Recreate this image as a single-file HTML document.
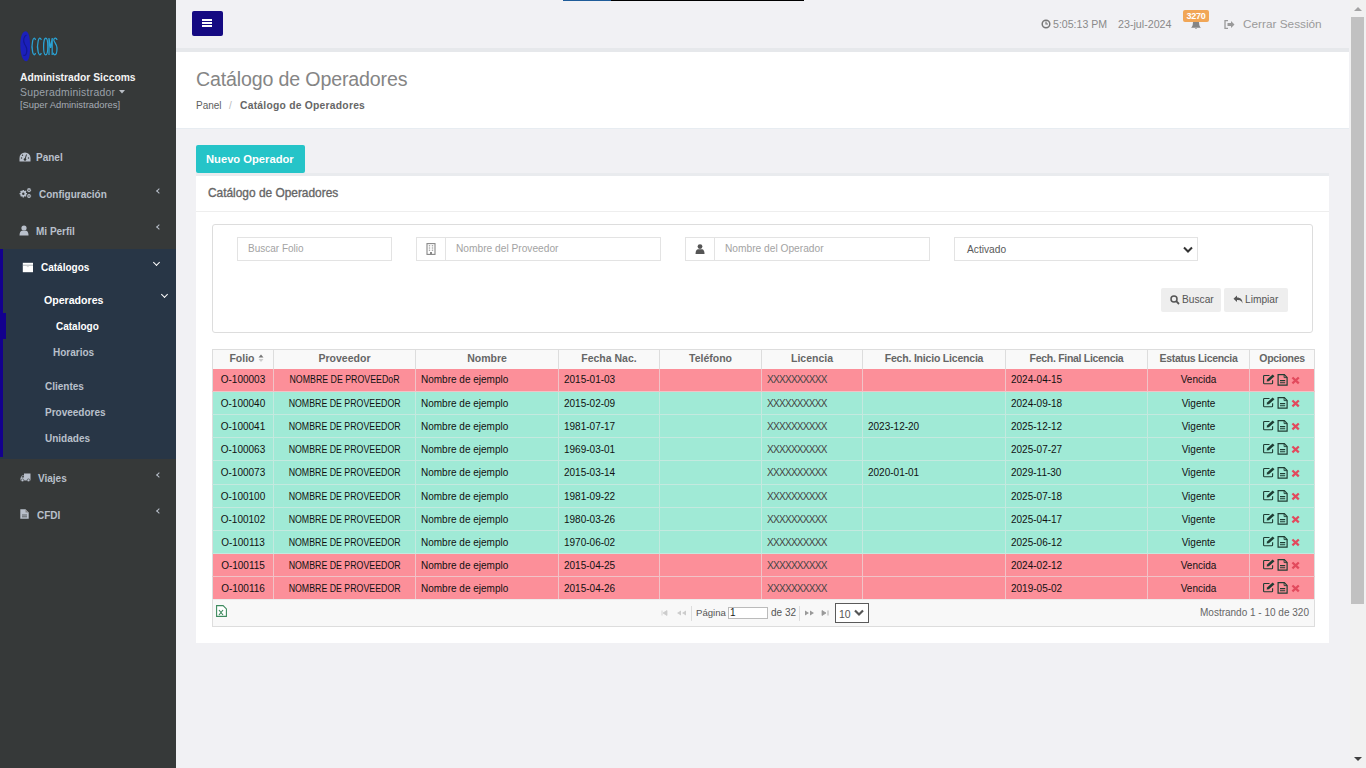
<!DOCTYPE html>
<html><head><meta charset="utf-8">
<style>
*{box-sizing:border-box;margin:0;padding:0}
html,body{width:1366px;height:768px;overflow:hidden;background:#f1f1f4;font-family:"Liberation Sans",sans-serif}
.a{position:absolute;white-space:nowrap;line-height:1}
#sb{position:absolute;left:0;top:0;width:176px;height:768px;background:#363939}
#cat{position:absolute;left:0;top:249px;width:176px;height:210px;background:#283646}
#strip{position:absolute;left:0;top:249px;width:3px;height:208px;background:#13008e}
#strip2{position:absolute;left:0;top:313px;width:6px;height:26px;background:#13008e}
.nav{color:#b9c0cb;font-weight:bold;font-size:10px}
.chl{position:absolute;width:4px;height:4px;border-left:1.4px solid #b9c0cb;border-bottom:1.4px solid #b9c0cb;transform:rotate(45deg)}
.chd{position:absolute;width:5px;height:5px;border-right:1.6px solid #fff;border-bottom:1.6px solid #fff;transform:rotate(45deg)}
#hdr{position:absolute;left:176px;top:0;width:1173px;height:48px;background:#f1f1f4}
#hdrb{position:absolute;left:176px;top:48px;width:1173px;height:4px;background:#e6e8eb}
#ttl{position:absolute;left:176px;top:52px;width:1173px;height:77px;background:#fff;border-bottom:1px solid #e7ecf1}
#panel{position:absolute;left:196px;top:176px;width:1133px;height:467px;background:#fff}
#ptop{position:absolute;left:196px;top:173px;width:1133px;height:3px;background:#e9ebee}
.inp{position:absolute;border:1px solid #e3e3e3;background:#fff;height:24px;top:237px}
.ph{position:absolute;color:#a3a3a3;font-size:10.2px;line-height:1;white-space:nowrap}
.btn{position:absolute;background:#eeeeee;border-radius:2px;top:288px;height:24px}
table.g{position:absolute;left:212px;top:349px;width:1102px;border-collapse:collapse;table-layout:fixed;font-size:10px;color:#111}
table.g th{height:19px;background:#f9f9f9;border:1px solid #dddddd;border-bottom:none;font-weight:bold;color:#666;font-size:10.5px;padding:0;line-height:1}
table.g td{border-right:1px solid #f6eeee;border-bottom:1px solid #eeeeee;padding:1px 5px 0;white-space:nowrap;overflow:hidden;line-height:1}
table.g td:first-child{border-left:1px solid #dddddd}
table.g td:last-child{border-right:1px solid #dddddd}
tr.r td{background:#fc8f99}
tr.v td{background:#a0ead6}
table.g td.c{text-align:center}
table.g td.prov span{display:inline-block;transform:scaleX(0.88)}
table.g td.lic{letter-spacing:-0.7px;color:#444}
table.g th span.t{position:relative;top:-1px}
table.g td svg{display:block;margin:0 0 0 8px}
tr.v td{border-right-color:#c4e9df;border-bottom-color:#c4e9df}
tr.r td{border-right-color:#f1c3c7;border-bottom-color:#f1c3c7}
#pager{position:absolute;left:212px;top:599px;width:1103px;height:28px;background:#f8f8f8;border:1px solid #dddddd;border-top:1px solid #ececec}
.pt{position:absolute;font-size:10px;color:#555;line-height:1;white-space:nowrap}
#sbar{position:absolute;left:1350px;top:0;width:16px;height:768px;background:#f1f1f1}
#thumb{position:absolute;left:1351px;top:17px;width:13px;height:587px;background:#c1c1c1}
</style></head><body>
<svg width="0" height="0" style="position:absolute">
 <defs>
  <g id="ops">
   <path d="M6.5 1.5H1.4a0.8 0.8 0 0 0-0.8 0.8v6.6a0.8 0.8 0 0 0 0.8 0.8h7.4a0.8 0.8 0 0 0 0.8-0.8V6.2" fill="none" stroke="#1f3d33" stroke-width="1.1"/>
   <path d="M3.6 7.6l0.5-2.2 5.6-5 1.8 1.8-5.6 5z" fill="#1f3d33"/>
   <path d="M15.1 0.6H21.3L24.1 3.4V11.2H15.1Z" fill="none" stroke="#1f3d33" stroke-width="1.2"/>
   <path d="M21.1 0.6V3.6H24.1" fill="none" stroke="#1f3d33" stroke-width="0.9"/>
   <path d="M17 6.6h5.2M17 8.7h5.2" stroke="#1f3d33" stroke-width="1.1"/>
   <path d="M29.4 3.5l6.4 5.8M35.8 3.5l-6.4 5.8" stroke="#e24a5d" stroke-width="2.3"/>
  </g>
 </defs>
</svg>
<div id="sb"></div>
<div id="cat"></div>
<div id="strip"></div><div id="strip2"></div>

<!-- logo -->
<svg class="a" style="left:18px;top:29px" width="44" height="34" viewBox="0 0 44 34">
  <path d="M7.5 2.3 C3.5 3 2.2 10 2.3 17 C2.4 25 4.5 32.3 8.5 32.3 C11.5 31.5 12.2 24 12.1 16.5 C12 9 11 2.3 7.5 2.3z" fill="#1b20bb"/>
  <path d="M8.5 6 C5.5 7 5 12 6.5 15 C8 18 10 19 8.5 24 C7.8 26.5 6.5 27 5.5 26" stroke="#13188f" stroke-width="1.1" fill="none"/>
  <g fill="none" stroke="#2aa2d4" stroke-width="1.25">
   <path d="M17.5 11 A2.1 8.3 0 1 0 17.5 24"/>
   <path d="M23.3 11 A2.3 8.3 0 1 0 23.3 24"/>
   <ellipse cx="27.7" cy="17.4" rx="2.1" ry="8.4"/>
   <path d="M31 26V9l1.6 10 1.6-10v17"/>
   <path d="M39 11c-0.4-2-2.5-2.6-3.2-0.5-0.6 2 3.2 4.5 3.2 8.5 0 3-0.8 6.8-2.3 6.8-1 0-1.3-1-1.3-2"/>
  </g>
</svg>

<div class="a" style="left:20px;top:73px;color:#f4f4f4;font-weight:bold;font-size:10.3px">Administrador Siccoms</div>
<div class="a" style="left:20px;top:87.5px;color:#9ba1a9;font-size:10.4px;letter-spacing:0.25px">Superadministrador</div>
<svg class="a" style="left:119px;top:90px" width="6" height="4"><path d="M0 0h6l-3 3.5z" fill="#b9bec5"/></svg>
<div class="a" style="left:20px;top:100px;color:#a7adb5;font-size:9.4px">[Super Administradores]</div>

<!-- nav icons -->
<svg class="a" style="left:19px;top:152px" width="12" height="10" viewBox="0 0 12 10"><path d="M6 0.5A5.5 5.5 0 0 0 0.5 6v3.5h11V6A5.5 5.5 0 0 0 6 0.5z" fill="#b9c0cb"/><circle cx="6" cy="7.5" r="1.3" fill="#363939"/><path d="M6 7.5L7.5 2.5" stroke="#363939" stroke-width="1"/><circle cx="2.5" cy="6" r=".7" fill="#363939"/><circle cx="9.5" cy="6" r=".7" fill="#363939"/><circle cx="3.5" cy="3.3" r=".7" fill="#363939"/></svg>
<div class="a nav" style="left:36px;top:153px">Panel</div>

<svg class="a" style="left:19px;top:187px" width="13" height="13" viewBox="0 0 13 13"><path fill-rule="evenodd" d="M7.19 5.89 L8.04 6.03 L8.04 7.37 L7.19 7.51 L6.92 8.17 L7.42 8.87 L6.47 9.82 L5.77 9.32 L5.11 9.59 L4.97 10.44 L3.63 10.44 L3.49 9.59 L2.83 9.32 L2.13 9.82 L1.18 8.87 L1.68 8.17 L1.41 7.51 L0.56 7.37 L0.56 6.03 L1.41 5.89 L1.68 5.23 L1.18 4.53 L2.13 3.58 L2.83 4.08 L3.49 3.81 L3.63 2.96 L4.97 2.96 L5.11 3.81 L5.77 4.08 L6.47 3.58 L7.42 4.53 L6.92 5.23Z M5.50 6.70 A1.2 1.2 0 1 0 3.10 6.70 A1.2 1.2 0 1 0 5.50 6.70Z M11.54 2.61 L12.14 2.69 L12.14 3.71 L11.54 3.79 L11.28 4.24 L11.51 4.80 L10.62 5.31 L10.26 4.83 L9.74 4.83 L9.38 5.31 L8.49 4.80 L8.72 4.24 L8.46 3.79 L7.86 3.71 L7.86 2.69 L8.46 2.61 L8.72 2.16 L8.49 1.60 L9.38 1.09 L9.74 1.57 L10.26 1.57 L10.62 1.09 L11.51 1.60 L11.28 2.16Z M10.75 3.20 A0.75 0.75 0 1 0 9.25 3.20 A0.75 0.75 0 1 0 10.75 3.20Z M11.54 8.41 L12.14 8.49 L12.14 9.51 L11.54 9.59 L11.28 10.04 L11.51 10.60 L10.62 11.11 L10.26 10.63 L9.74 10.63 L9.38 11.11 L8.49 10.60 L8.72 10.04 L8.46 9.59 L7.86 9.51 L7.86 8.49 L8.46 8.41 L8.72 7.96 L8.49 7.40 L9.38 6.89 L9.74 7.37 L10.26 7.37 L10.62 6.89 L11.51 7.40 L11.28 7.96Z M10.75 9.00 A0.75 0.75 0 1 0 9.25 9.00 A0.75 0.75 0 1 0 10.75 9.00Z" fill="#b9c0cb"/></svg>
<div class="a nav" style="left:39px;top:190px">Configuración</div>
<div class="chl" style="left:157px;top:189px"></div>

<svg class="a" style="left:19px;top:225px" width="10" height="11" viewBox="0 0 10 11"><circle cx="5" cy="3" r="2.6" fill="#b9c0cb"/><path d="M0.5 10.5C0.5 7 2 5.8 3 5.8h4c1 0 2.5 1.2 2.5 4.7z" fill="#b9c0cb"/></svg>
<div class="a nav" style="left:36px;top:227px">Mi Perfil</div>
<div class="chl" style="left:157px;top:225px"></div>

<svg class="a" style="left:22px;top:262px" width="12" height="11" viewBox="0 0 12 11"><rect x="0.8" y="0.8" width="10.2" height="9.4" fill="#fff"/><path d="M0.8 3.2h10.2" stroke="#8d939a" stroke-width="0.7"/><path d="M4.8 4.6h2" stroke="#bbb" stroke-width="0.6"/></svg>
<div class="a" style="left:41px;top:263px;color:#fff;font-weight:bold;font-size:10px">Catálogos</div>
<div class="chd" style="left:154px;top:260px"></div>

<div class="a" style="left:44px;top:295px;color:#fff;font-weight:bold;font-size:10.6px">Operadores</div>
<div class="chd" style="left:162px;top:292px"></div>
<div class="a" style="left:56px;top:322px;color:#fff;font-weight:bold;font-size:10px">Catalogo</div>
<div class="a nav" style="left:53px;top:348px">Horarios</div>
<div class="a nav" style="left:45px;top:382px">Clientes</div>
<div class="a nav" style="left:45px;top:408px">Proveedores</div>
<div class="a nav" style="left:45px;top:434px">Unidades</div>

<svg class="a" style="left:20px;top:473px" width="11" height="9" viewBox="0 0 11 9"><path d="M10.5 0.5H4v2H2L0.5 5v2.5h10z" fill="#b9c0cb"/><path d="M1.6 4.6l0.9-1.5h1.3v1.5z" fill="#363939"/><circle cx="2.5" cy="7.3" r="1.4" fill="#b9c0cb" stroke="#363939" stroke-width=".6"/><circle cx="8.5" cy="7.3" r="1.4" fill="#b9c0cb" stroke="#363939" stroke-width=".6"/></svg>
<div class="a nav" style="left:38px;top:474px">Viajes</div>
<div class="chl" style="left:157px;top:473px"></div>

<svg class="a" style="left:20px;top:509px" width="9" height="10" viewBox="0 0 9 10"><path d="M0.3 0.3h5.2l3.2 3.2v6.2H0.3z" fill="#b9c0cb"/><path d="M5.5 0.3v3.2h3.2" fill="#888" /><path d="M2 6h5M2 7.8h5" stroke="#363939" stroke-width=".7"/></svg>
<div class="a nav" style="left:37px;top:511px">CFDI</div>
<div class="chl" style="left:157px;top:509px"></div>

<div id="hdr"></div><div id="hdrb"></div>
<div class="a" style="left:563px;top:0;width:48px;height:1px;background:#1f5c99"></div>
<div class="a" style="left:611px;top:0;width:193px;height:1px;background:#000"></div>
<div class="a" style="left:192px;top:11px;width:31px;height:25px;background:#150a82;border-radius:2px"></div>
<svg class="a" style="left:202px;top:19px" width="10" height="8"><path d="M0 1h10M0 4h10M0 7h10" stroke="#fff" stroke-width="1.8"/></svg>

<svg class="a" style="left:1041px;top:19px" width="10" height="10" viewBox="0 0 10 10"><circle cx="5" cy="5" r="3.8" fill="none" stroke="#777" stroke-width="1.5"/><path d="M5 2.6V5h2" fill="none" stroke="#777" stroke-width="1.2"/></svg>
<div class="a" style="left:1053px;top:19px;color:#8a8a8a;font-size:10.6px">5:05:13 PM</div>
<div class="a" style="left:1118px;top:19px;color:#8a8a8a;font-size:10.7px">23-jul-2024</div>
<svg class="a" style="left:1190px;top:19px" width="12" height="11" viewBox="0 0 12 11"><path d="M6 1C3.5 1 2.8 3 2.8 5c0 2-1 3-1.8 3.8h10C10.2 8 9.2 7 9.2 5 9.2 3 8.5 1 6 1z" fill="#858585"/><path d="M4.8 9.3a1.3 1.3 0 0 0 2.4 0z" fill="#858585"/></svg>
<div class="a" style="left:1183px;top:10px;width:26px;height:12px;background:#f1a656;border-radius:2px;color:#fff;font-size:9px;font-weight:bold;letter-spacing:-0.3px;text-align:center;line-height:12px">3270</div>
<svg class="a" style="left:1224px;top:20px" width="12" height="9" viewBox="0 0 12 9"><path d="M4 0.7H1v7.6h3" fill="none" stroke="#9a9a9a" stroke-width="1.3"/><path d="M3.5 3h3.5V1L10.5 4.5 7 8V6H3.5z" fill="#9a9a9a"/></svg>
<div class="a" style="left:1243px;top:19px;color:#9a9a9a;font-size:11.8px">Cerrar Sessión</div>

<div id="ttl"></div>
<div class="a" style="left:196px;top:69.5px;color:#858585;font-size:19.6px;letter-spacing:-0.15px">Catálogo de Operadores</div>
<div class="a" style="left:196px;top:101px;color:#5e5e5e;font-size:10px">Panel</div>
<div class="a" style="left:229px;top:101px;color:#bbb;font-size:10px">/</div>
<div class="a" style="left:240px;top:100.5px;color:#666;font-size:10.3px;letter-spacing:0.25px;font-weight:bold">Catálogo de Operadores</div>

<div class="a" style="left:196px;top:145px;width:109px;height:28px;background:#25c4c8;border-radius:2px"></div>
<div class="a" style="left:206px;top:154px;color:#fff;font-size:11.2px;font-weight:bold">Nuevo Operador</div>

<div id="ptop"></div>
<div id="panel"></div>
<div class="a" style="left:208px;top:188px;color:#666;font-size:11.9px;-webkit-text-stroke:0.35px #666">Catálogo de Operadores</div>
<div class="a" style="left:196px;top:211px;width:1133px;height:1px;background:#eeeeee"></div>

<div class="a" style="left:212px;top:224px;width:1101px;height:109px;border:1px solid #dddddd;border-radius:3px"></div>
<div class="inp" style="left:237px;width:155px"></div>
<div class="ph" style="left:248px;top:244px;font-size:10px">Buscar Folio</div>
<div class="inp" style="left:416px;width:245px"></div>
<div class="a" style="left:445px;top:237px;width:1px;height:24px;background:#e3e3e3"></div>
<svg class="a" style="left:426px;top:243px" width="10" height="12" viewBox="0 0 10 12"><rect x="1" y="0.6" width="8" height="10.8" fill="none" stroke="#888" stroke-width="1.1"/><path d="M2.8 2.8h1.4M5.8 2.8h1.4M2.8 5h1.4M5.8 5h1.4M2.8 7.2h1.4M5.8 7.2h1.4" stroke="#888" stroke-width="1"/><rect x="4" y="9" width="2" height="2.5" fill="#888"/></svg>
<div class="ph" style="left:456px;top:244px">Nombre del Proveedor</div>
<div class="inp" style="left:685px;width:245px"></div>
<div class="a" style="left:714px;top:237px;width:1px;height:24px;background:#e3e3e3"></div>
<svg class="a" style="left:695px;top:244px" width="10" height="10" viewBox="0 0 10 10"><circle cx="5" cy="2.6" r="2.4" fill="#555"/><path d="M0.5 10C0.5 6.5 2 5.3 3 5.3h4c1 0 2.5 1.2 2.5 4.7z" fill="#555"/></svg>
<div class="ph" style="left:725px;top:244px">Nombre del Operador</div>
<div class="inp" style="left:954px;width:244px"></div>
<div class="ph" style="left:967px;top:245px;color:#5a5a5a">Activado</div>
<svg class="a" style="left:1183px;top:246px" width="10" height="8"><path d="M1 1.5l4 4 4-4" fill="none" stroke="#333" stroke-width="2"/></svg>

<div class="btn" style="left:1161px;width:60px"></div>
<svg class="a" style="left:1170px;top:295px" width="10" height="10" viewBox="0 0 10 10"><circle cx="4" cy="4" r="3" fill="none" stroke="#555" stroke-width="1.5"/><path d="M6.2 6.2L9 9" stroke="#555" stroke-width="1.8"/></svg>
<div class="ph" style="left:1182px;top:295px;color:#555">Buscar</div>
<div class="btn" style="left:1224px;width:64px"></div>
<svg class="a" style="left:1233px;top:295px" width="10" height="9" viewBox="0 0 10 9"><path d="M4 0.5L0.5 3.8 4 7V5c3 0 4.5 0.5 5.5 3.5C9.5 4.5 7.5 2.7 4 2.6z" fill="#555"/></svg>
<div class="ph" style="left:1245px;top:295px;color:#555">Limpiar</div>

<table class="g">
<colgroup><col style="width:61px"><col style="width:142px"><col style="width:143px"><col style="width:101px"><col style="width:102px"><col style="width:101px"><col style="width:143px"><col style="width:142px"><col style="width:102px"><col style="width:65px"></colgroup>
<tr><th><span class="t" style="left:-1px">Folio</span></th><th><span class="t">Proveedor</span></th><th><span class="t">Nombre</span></th><th><span class="t">Fecha Nac.</span></th><th><span class="t">Teléfono</span></th><th><span class="t">Licencia</span></th><th><span class="t" style="letter-spacing:-0.2px">Fech. Inicio Licencia</span></th><th><span class="t" style="letter-spacing:-0.3px">Fech. Final Licencia</span></th><th><span class="t" style="letter-spacing:-0.3px">Estatus Licencia</span></th><th><span class="t" style="letter-spacing:-0.3px">Opciones</span></th></tr>
<tr class="r" style="height:23px"><td class="c">O-100003</td><td class="c prov"><span>NOMBRE DE PROVEEDoR</span></td><td>Nombre de ejemplo</td><td>2015-01-03</td><td></td><td class="lic">XXXXXXXXXX</td><td></td><td>2024-04-15</td><td class="c">Vencida</td><td><svg width="40" height="13"><use href="#ops"/></svg></td></tr>
<tr class="v" style="height:23px"><td class="c">O-100040</td><td class="c prov"><span>NOMBRE DE PROVEEDOR</span></td><td>Nombre de ejemplo</td><td>2015-02-09</td><td></td><td class="lic">XXXXXXXXXX</td><td></td><td>2024-09-18</td><td class="c">Vigente</td><td><svg width="40" height="13"><use href="#ops"/></svg></td></tr>
<tr class="v" style="height:23px"><td class="c">O-100041</td><td class="c prov"><span>NOMBRE DE PROVEEDOR</span></td><td>Nombre de ejemplo</td><td>1981-07-17</td><td></td><td class="lic">XXXXXXXXXX</td><td>2023-12-20</td><td>2025-12-12</td><td class="c">Vigente</td><td><svg width="40" height="13"><use href="#ops"/></svg></td></tr>
<tr class="v" style="height:23px"><td class="c">O-100063</td><td class="c prov"><span>NOMBRE DE PROVEEDOR</span></td><td>Nombre de ejemplo</td><td>1969-03-01</td><td></td><td class="lic">XXXXXXXXXX</td><td></td><td>2025-07-27</td><td class="c">Vigente</td><td><svg width="40" height="13"><use href="#ops"/></svg></td></tr>
<tr class="v" style="height:24px"><td class="c">O-100073</td><td class="c prov"><span>NOMBRE DE PROVEEDOR</span></td><td>Nombre de ejemplo</td><td>2015-03-14</td><td></td><td class="lic">XXXXXXXXXX</td><td>2020-01-01</td><td>2029-11-30</td><td class="c">Vigente</td><td><svg width="40" height="13"><use href="#ops"/></svg></td></tr>
<tr class="v" style="height:23px"><td class="c">O-100100</td><td class="c prov"><span>NOMBRE DE PROVEEDOR</span></td><td>Nombre de ejemplo</td><td>1981-09-22</td><td></td><td class="lic">XXXXXXXXXX</td><td></td><td>2025-07-18</td><td class="c">Vigente</td><td><svg width="40" height="13"><use href="#ops"/></svg></td></tr>
<tr class="v" style="height:23px"><td class="c">O-100102</td><td class="c prov"><span>NOMBRE DE PROVEEDOR</span></td><td>Nombre de ejemplo</td><td>1980-03-26</td><td></td><td class="lic">XXXXXXXXXX</td><td></td><td>2025-04-17</td><td class="c">Vigente</td><td><svg width="40" height="13"><use href="#ops"/></svg></td></tr>
<tr class="v" style="height:23px"><td class="c">O-100113</td><td class="c prov"><span>NOMBRE DE PROVEEDOR</span></td><td>Nombre de ejemplo</td><td>1970-06-02</td><td></td><td class="lic">XXXXXXXXXX</td><td></td><td>2025-06-12</td><td class="c">Vigente</td><td><svg width="40" height="13"><use href="#ops"/></svg></td></tr>
<tr class="r" style="height:23px"><td class="c">O-100115</td><td class="c prov"><span>NOMBRE DE PROVEEDOR</span></td><td>Nombre de ejemplo</td><td>2015-04-25</td><td></td><td class="lic">XXXXXXXXXX</td><td></td><td>2024-02-12</td><td class="c">Vencida</td><td><svg width="40" height="13"><use href="#ops"/></svg></td></tr>
<tr class="r" style="height:23px"><td class="c">O-100116</td><td class="c prov"><span>NOMBRE DE PROVEEDOR</span></td><td>Nombre de ejemplo</td><td>2015-04-26</td><td></td><td class="lic">XXXXXXXXXX</td><td></td><td>2019-05-02</td><td class="c">Vencida</td><td><svg width="40" height="13"><use href="#ops"/></svg></td></tr>
</table>
<svg class="a" style="left:258px;top:354px" width="6" height="9"><path d="M0.5 3.5L3 0.5 5.5 3.5z" fill="#777"/><path d="M0.5 5L3 8 5.5 5z" fill="#ccc"/></svg>

<div id="pager"></div>
<svg class="a" style="left:216px;top:605px" width="11" height="12" viewBox="0 0 11 12"><path d="M0.6 0.6h6.5l3.3 3.3v7.5H0.6z" fill="#fff" stroke="#3d8a5e" stroke-width="1.1"/><path d="M3 5l4 5M7 5l-4 5" stroke="#3d8a5e" stroke-width="1.2"/></svg>
<svg class="a" style="left:661px;top:610px" width="26" height="6"><path d="M1 0.5v5M2 3l4-2.5v5z" fill="#ccc" stroke="#ccc" stroke-width=".8"/><path d="M16 3l4-2.5v5zM21 3l4-2.5v5z" fill="#ccc"/></svg>
<div class="a" style="left:691px;top:606px;width:1px;height:15px;background:#ddd"></div>
<div class="pt" style="left:696px;top:608px;font-size:9.6px">Página</div>
<div class="a" style="left:728px;top:607px;width:40px;height:12px;background:#fff;border:1px solid #bbb"></div>
<div class="pt" style="left:730px;top:608px;color:#222">1</div>
<div class="pt" style="left:771px;top:608px">de 32</div>
<div class="a" style="left:799px;top:606px;width:1px;height:15px;background:#ddd"></div>
<svg class="a" style="left:805px;top:610px" width="26" height="6"><path d="M0 0.5l4 2.5-4 2.5zM5 0.5l4 2.5-4 2.5z" fill="#999"/><path d="M17 0.5l4 2.5-4 2.5zM23 0.5v5" fill="#999" stroke="#999" stroke-width=".8"/></svg>
<div class="a" style="left:835px;top:603px;width:34px;height:20px;background:#fff;border:1px solid #5a5a5a"></div>
<div class="pt" style="left:839px;top:609px;color:#555;font-size:10.5px">10</div>
<svg class="a" style="left:854px;top:609px" width="10" height="8"><path d="M1 1.5l4 4 4-4" fill="none" stroke="#555" stroke-width="2.2"/></svg>
<div class="pt" style="left:1200px;top:608px;color:#666">Mostrando 1 - 10 de 320</div>

<div id="sbar"></div><div id="thumb"></div>
<svg class="a" style="left:1353px;top:6px" width="10" height="6"><path d="M1 5l4-4 4 4z" fill="#a3a3a3"/></svg>
<svg class="a" style="left:1353px;top:756px" width="10" height="6"><path d="M1 1l4 4 4-4z" fill="#404040"/></svg>
</body></html>
